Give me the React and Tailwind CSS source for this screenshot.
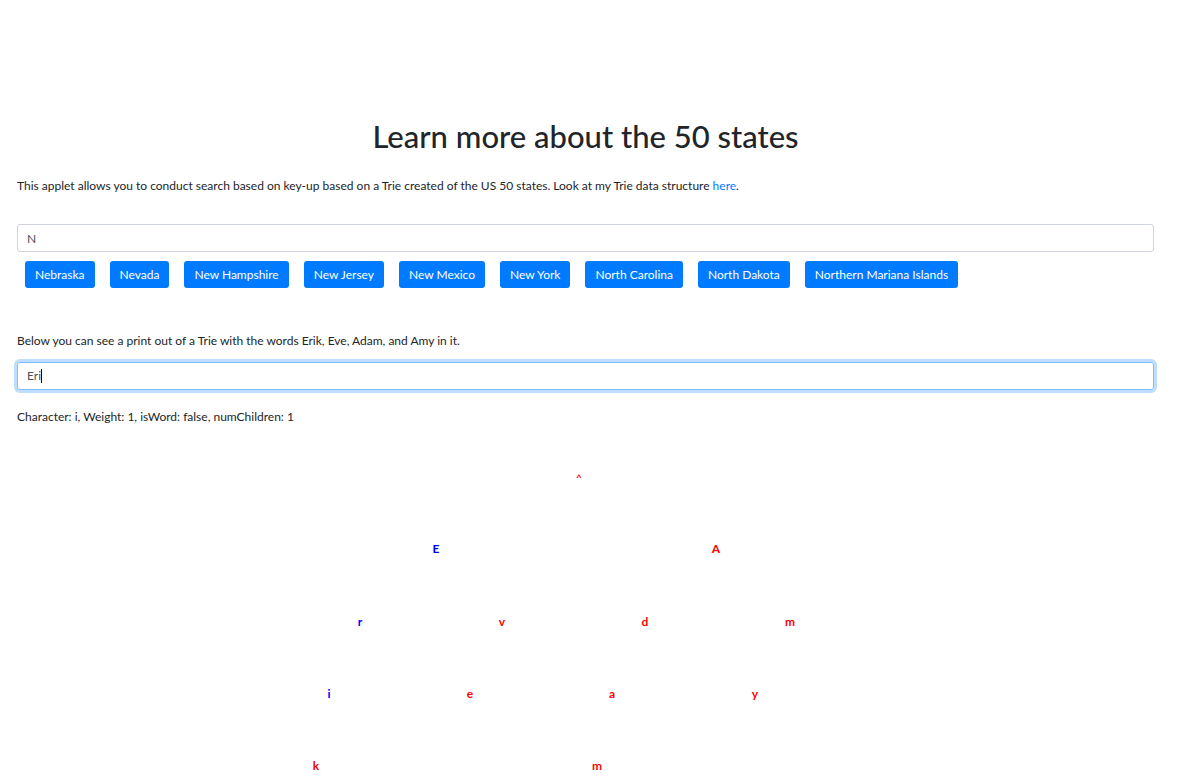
import React from 'react';

const STATES = [
  'Nebraska',
  'Nevada',
  'New Hampshire',
  'New Jersey',
  'New Mexico',
  'New York',
  'North Carolina',
  'North Dakota',
  'Northern Mariana Islands',
];

// trie nodes, x/y are centers inside the canvas
const NODES = [
  { ch: '^', x: 562, y: 51, on: false, small: true },
  { ch: 'E', x: 419, y: 123, on: true },
  { ch: 'A', x: 699, y: 123, on: false },
  { ch: 'r', x: 343, y: 196, on: true },
  { ch: 'v', x: 485, y: 196, on: false },
  { ch: 'd', x: 628, y: 196, on: false },
  { ch: 'm', x: 773, y: 196, on: false },
  { ch: 'i', x: 312, y: 268, on: true },
  { ch: 'e', x: 453, y: 268, on: false },
  { ch: 'a', x: 595, y: 268, on: false },
  { ch: 'y', x: 738, y: 268, on: false },
  { ch: 'k', x: 299, y: 340, on: false },
  { ch: 'm', x: 580, y: 340, on: false },
];

export default function App() {
  return (
    <div className="min-h-[784px] bg-white text-[#212529] font-['Lato','Liberation_Sans',sans-serif] overflow-hidden">
      <div className="w-[1137px] ml-[17px] pt-[118px]">
        <h1 className="text-[31px] leading-[36px] font-medium text-center">Learn more about the 50 states</h1>

        <p className="mt-[23px] text-[12px] leading-[18px]">
          This applet allows you to conduct search based on key-up based on a Trie created of the US 50 states. Look at my Trie data structure{' '}
          <a href="#" className="text-[#007bff]">here</a>.
        </p>

        <input
          readOnly
          value="N"
          className="mt-[29px] block w-full h-[28px] px-[9px] text-[12px] text-[#495057] border border-[#ced4da] rounded-[3px] outline-none"
        />

        <div className="mt-[9px] flex gap-[15px] pl-[8px]">
          {STATES.map((s) => (
            <button
              key={s}
              className="h-[27px] px-[10px] bg-[#007bff] text-white text-[12px] rounded-[3px]"
            >
              {s}
            </button>
          ))}
        </div>

        <p className="mt-[44px] text-[12px] leading-[18px]">
          Below you can see a print out of a Trie with the words Erik, Eve, Adam, and Amy in it.
        </p>

        <div className="mt-[12px] h-[28px] px-[9px] flex items-center text-[12px] text-[#495057] border border-[#80bdff] rounded-[3px] shadow-[0_0_0_3px_rgba(0,123,255,0.25)]">
          Eri<span className="inline-block w-px h-[14px] bg-black" />
        </div>

        <p className="mt-[18px] text-[12px] leading-[18px]">
          Character: i, Weight: 1, isWord: false, numChildren: 1
        </p>

        <div className="relative h-[360px]">
          {NODES.map((n, i) => (
            <span
              key={i}
              className={`absolute -translate-x-1/2 -translate-y-1/2 font-bold leading-none ${n.small ? 'text-[10px]' : 'text-[12px]'} ${n.on ? 'text-[#0000ff]' : 'text-[#ff0000]'}`}
              style={{ left: n.x, top: n.y }}
            >
              {n.ch}
            </span>
          ))}
        </div>
      </div>
    </div>
  );
}
